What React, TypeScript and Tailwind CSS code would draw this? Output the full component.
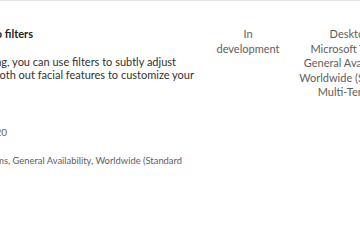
export default function App() {
  return (
    <div className="w-[360px] h-[240px] overflow-hidden bg-white border-t border-[#e6e6e6] font-['Lato',sans-serif] text-[11px]">
      <div className="flex pt-[26px]">
        {/* Feature column */}
        <div className="w-[208px] shrink-0 flex flex-col">
          <div className="w-[33px] flex justify-end whitespace-nowrap leading-[14px] font-bold text-[#252423]">
            <span>Microsoft Teams: Video filters</span>
          </div>
          <div className="mt-[15px] flex flex-col leading-[12.5px] text-[#323130]">
            <div className="w-[176px] flex justify-end whitespace-nowrap">
              <span>Before joining a meeting, you can use filters to subtly adjust</span>
            </div>
            <div className="w-[194px] flex justify-end whitespace-nowrap">
              <span>lighting, soften focus and smooth out facial features to customize your</span>
            </div>
          </div>
          <div className="mt-[44px] w-[7px] flex justify-end whitespace-nowrap leading-[14px] text-[10px] text-[#605e5c]">
            <span>Preview Available: October CY2020</span>
          </div>
          <div className="mt-[15px] w-[182px] flex justify-end whitespace-nowrap leading-[14px] text-[9.4px] text-[#605e5c]">
            <span>Microsoft Teams, General Availability, Worldwide (Standard</span>
          </div>
        </div>
        {/* Status column */}
        <div className="w-[68px] shrink-0 ml-[6px] text-center leading-[14.5px] text-[#605e5c]">
          In development
        </div>
        {/* Tags column */}
        <div className="w-[120px] shrink-0 ml-[8px] text-center leading-[14.5px] text-[#605e5c]">
          Desktop
          <br />
          Microsoft Teams
          <br />
          General Availability
          <br />
          Worldwide (Standard
          <br />
          Multi-Tenant)
        </div>
      </div>
    </div>
  );
}
